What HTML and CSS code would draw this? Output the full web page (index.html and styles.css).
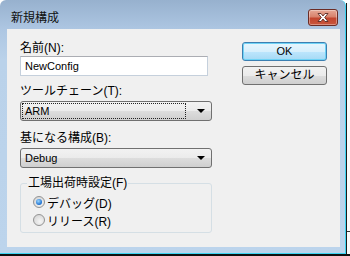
FILE: index.html
```html
<!DOCTYPE html>
<html lang="ja">
<head>
  <meta charset="UTF-8">
  <title>新規構成</title>
  <link rel="stylesheet" href="styles.css">
</head>
<body>

  <div class="screen">
    <div class="window">

      <div class="titlebar">
        <span class="title">新規構成</span>
        <div class="close">
          <svg width="16" height="11" viewBox="0 0 16 11">
            <path d="M3 1.5 L6 1.5 L8 4 L10 1.5 L13 1.5 L9.7 5.5 L13 9.5 L10 9.5 L8 7 L6 9.5 L3 9.5 L6.3 5.5 Z"
                  fill="#ffffff" stroke="#5a2a25" stroke-width="0.9" stroke-linejoin="round"/>
          </svg>
        </div>
      </div>

      <div class="client">
        <div class="form">
          <div class="lbl top">名前(N):</div>
          <div class="textbox">NewConfig</div>

          <div class="lbl">ツールチェーン(T):</div>
          <div class="combo">
            <span class="value focus">ARM</span>
            <span class="arrow"></span>
          </div>

          <div class="lbl">基になる構成(B):</div>
          <div class="combo">
            <span class="value">Debug</span>
            <span class="arrow"></span>
          </div>

          <fieldset class="group">
            <legend>工場出荷時設定(F)</legend>
            <div class="radio-row"><span class="radio checked"></span>デバッグ(D)</div>
            <div class="radio-row"><span class="radio"></span>リリース(R)</div>
          </fieldset>
        </div>

        <div class="buttons">
          <div class="btn default">OK</div>
          <div class="btn">キャンセル</div>
        </div>
      </div>

    </div>
    <div class="edge"><div class="edge-line"></div></div>
  </div>
  <div class="taskline"></div>

</body>
</html>
```

FILE: styles.css
```css
body {
  margin: 0;
  background-color: #ffffff;
  font-family: "Liberation Sans", "Noto Sans CJK JP", sans-serif;
  font-size: 12px;
  color: #000000;
}
.screen {
  display: flex;
  height: 254px;
}
.window {
  box-sizing: border-box;
  width: 346px;
  height: 254px;
  padding: 0 5px 6px 7px;
  border-radius: 6px 6px 0 0;
  border-right: 1px solid #3cd4f2;
  border-bottom: 1px solid #3cd4f2;
  background: linear-gradient(#97b1ce, #adc6e2 29px, #bad2ea 60px, #bcd4ec);
}
.edge {
  flex: 1;
  border-left: 1px solid #1b1b1b;
  margin-top: 3px;
  background-color: #fafafa;
}
.edge-line {
  margin-top: 228px;
  border-top: 1px solid #333;
}
.taskline {
  height: 2px;
  background-color: #111;
}

/* title bar */
.titlebar {
  display: flex;
  justify-content: space-between;
  align-items: flex-start;
  height: 29px;
  padding: 9px 2px 0 4px;
  box-sizing: border-box;
}
.title {
  margin-top: 2px;
  line-height: 14px;
  font-size: 12px;
  color: #111;
}
.close {
  box-sizing: border-box;
  width: 30px;
  height: 17px;
  border: 1px solid #6b2c25;
  border-radius: 3px;
  background: linear-gradient(#e6a896, #d8826c 45%, #c2452e 55%, #c9573e);
  box-shadow: inset 0 0 0 1px rgba(255,255,255,0.35);
  display: flex;
  justify-content: center;
  align-items: center;
}

/* dialog body */
.client {
  display: flex;
  height: 218px;
  padding-left: 13px;
  box-sizing: border-box;
  background-color: #f0f0f0;
}
.form {
  width: 192px;
  padding-top: 12px;
}
.lbl {
  line-height: 14px;
  margin-top: 8px;
  margin-bottom: 3px;
}
.lbl.top {
  margin-top: 0;
  margin-bottom: 1px;
}
.textbox {
  box-sizing: border-box;
  width: 188px;
  height: 20px;
  padding: 2px 4px;
  line-height: 14px;
  font-size: 11px;
  background-color: #ffffff;
  border: 1px solid #c5d0dc;
  border-top-color: #abadb3;
}
.textbox + .lbl {
  margin-top: 8px;
}
.combo {
  box-sizing: border-box;
  height: 20px;
  display: flex;
  align-items: center;
  padding: 0 6px 0 2px;
  border: 1px solid #707070;
  border-radius: 3px;
  background: linear-gradient(#f2f2f2, #ebebeb 50%, #dddddd 51%, #cfcfcf);
  font-size: 11px;
}
.combo + .lbl {
  margin-top: 10px;
}
.value {
  flex: 1;
  height: 14px;
  line-height: 14px;
  padding-left: 2px;
}
.value.focus {
  outline: 1px dotted #222;
  outline-offset: 0;
  margin-right: 10px;
}
.arrow {
  width: 0;
  height: 0;
  border-left: 4px solid transparent;
  border-right: 4px solid transparent;
  border-top: 4px solid #000;
  margin-left: 2px;
}

/* group box */
.group {
  margin: 8px 0 0 0;
  padding: 3px 8px 3px 12px;
  border: 1px solid #d5dfe5;
  border-radius: 3px;
  min-width: 0;
}
.group legend {
  margin-left: -6px;
  padding: 0 1px;
  line-height: 14px;
}
.radio-row {
  display: flex;
  align-items: center;
  height: 18px;
}
.radio {
  box-sizing: border-box;
  width: 12px;
  height: 12px;
  border-radius: 50%;
  border: 1px solid #939393;
  background: radial-gradient(circle at 60% 65%, #f6f6f6, #dadada 70%, #c8c8c8);
  margin-right: 2px;
  display: flex;
  justify-content: center;
  align-items: center;
}
.radio.checked::after {
  content: "";
  width: 6px;
  height: 6px;
  border-radius: 50%;
  background: radial-gradient(circle at 40% 35%, #9ad6ff, #1c6fcf 70%, #0e4a99);
}

/* buttons */
.buttons {
  margin-left: 30px;
  padding-top: 13px;
}
.btn {
  box-sizing: border-box;
  width: 85px;
  height: 19px;
  line-height: 17px;
  text-align: center;
  font-size: 12px;
  border: 1px solid #707070;
  border-radius: 3px;
  background: linear-gradient(#f2f2f2, #ebebeb 50%, #dddddd 51%, #cfcfcf);
  margin-bottom: 5px;
}
.btn.default {
  border-color: #3c7fb1;
  background: linear-gradient(#e8f6fd, #d7effc 50%, #bde6fd 51%, #a6d9f4);
  box-shadow: inset 0 0 0 1px #6fd3f6;
  font-size: 11px;
}
```
